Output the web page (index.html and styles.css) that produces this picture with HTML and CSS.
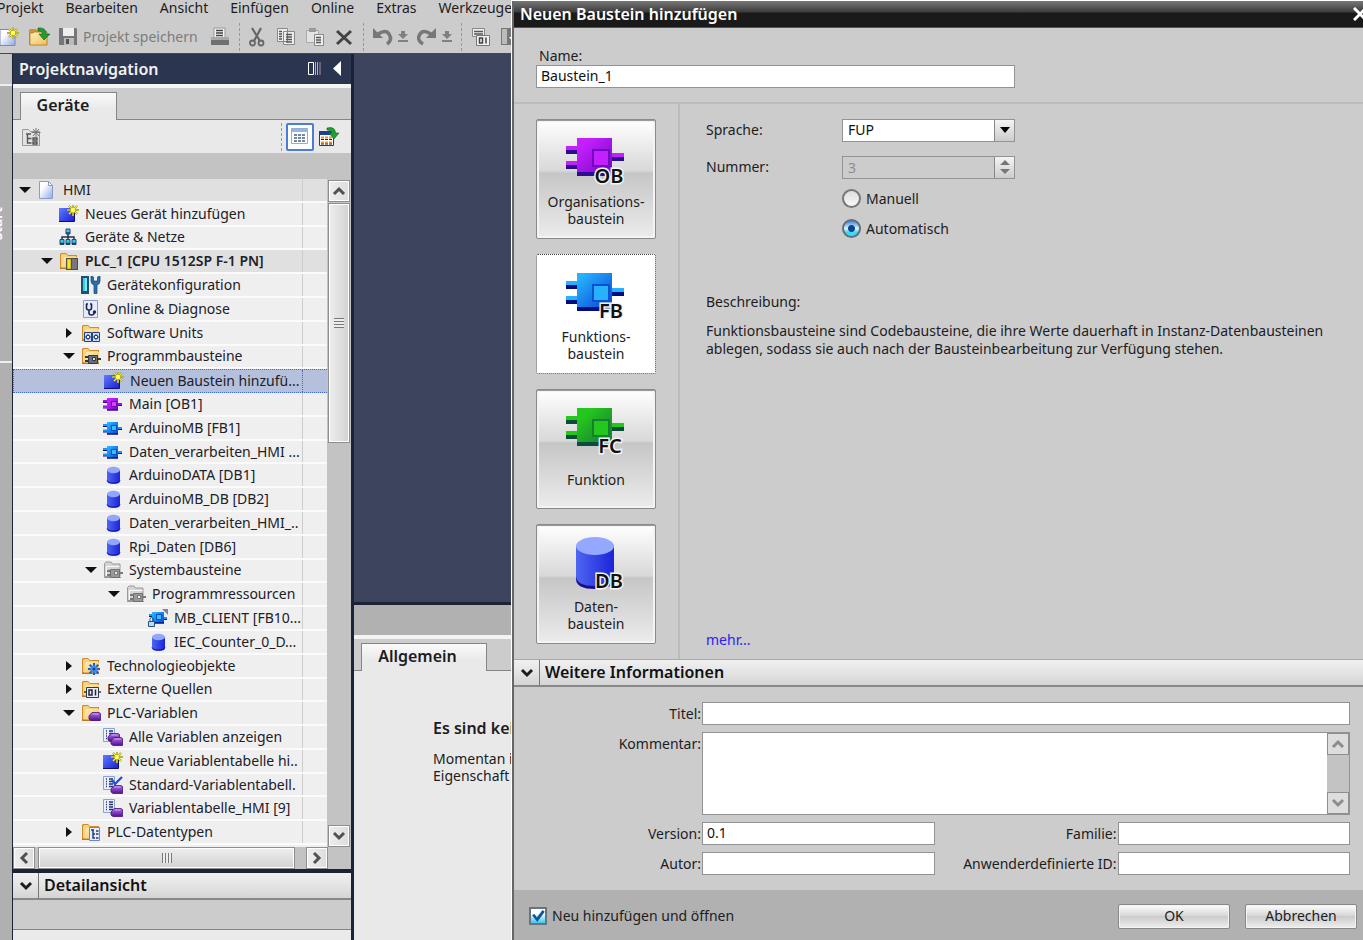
FILE: index.html
```html
<!DOCTYPE html>
<html lang="de">
<head>
<meta charset="utf-8">
<title>Neuen Baustein hinzufügen</title>
<link rel="stylesheet" href="styles.css">
</head>
<body>
<svg class="sprite" width="0" height="0" aria-hidden="true">
  <defs>
    <linearGradient id="g-purple" x1="0" y1="0" x2="1" y2="1"><stop offset=".2" stop-color="#c41fff"/><stop offset="1" stop-color="#7408c0"/></linearGradient>
    <linearGradient id="g-blue" x1="0" y1="0" x2="1" y2="1"><stop offset=".1" stop-color="#27b2ff"/><stop offset="1" stop-color="#0546d2"/></linearGradient>
    <linearGradient id="g-green" x1="0" y1="0" x2="1" y2="1"><stop offset=".2" stop-color="#24c81c"/><stop offset="1" stop-color="#187838"/></linearGradient>
    <linearGradient id="g-royal" x1="0" y1="0" x2="1" y2="1"><stop offset="0" stop-color="#5f7cff"/><stop offset="1" stop-color="#1a1ed0"/></linearGradient>
    <linearGradient id="g-cyl" x1="0" y1="0" x2="1" y2="0"><stop offset="0" stop-color="#4d66f2"/><stop offset="1" stop-color="#1c24d8"/></linearGradient>
    <linearGradient id="g-folder" x1="0" y1="0" x2="1" y2="1"><stop offset="0" stop-color="#fff0bd"/><stop offset="1" stop-color="#efbf5c"/></linearGradient>
    <linearGradient id="g-page" x1="0" y1="0" x2="1" y2="1"><stop offset=".3" stop-color="#fff"/><stop offset="1" stop-color="#8fa8e8"/></linearGradient>
    <linearGradient id="g-tag" x1="0" y1="0" x2="0" y2="1"><stop offset="0" stop-color="#b070e8"/><stop offset="1" stop-color="#501090"/></linearGradient>

    <symbol id="star" viewBox="0 0 12 12"><path d="M6 0v12M0 6h12M2 2l8 8M10 2l-8 8" stroke="#6a7440" stroke-width="2"/><path d="M6 0v12M0 6h12M2 2l8 8M10 2l-8 8" stroke="#fff22a" stroke-width="1.1"/><circle cx="6" cy="6" r="2" fill="#ffff50"/></symbol>
    <symbol id="folder" viewBox="0 0 20 18"><path d="M1 16V2l1-1h5l2 2h9v13z" fill="#cf8a2c"/><path d="M2 15V3l1-1h4l2 2h8v11z" fill="#f6d27c"/><path d="M3 15.500L5 5h13v10.500z" fill="url(#g-folder)"/><path d="M1 16.500h17" stroke="#b87828"/></symbol>
    <symbol id="folder-grey" viewBox="0 0 20 18"><path d="M1.500 15.500V2.500L3 1h5l1.500 2H17v12.500z" fill="#d4d4d4" stroke="#999"/><path d="M3.500 15V5.500h13" stroke="#f8f8f8" fill="none"/><path d="M1 16.500h17" stroke="#999"/></symbol>
    <symbol id="i-page" viewBox="0 0 20 18"><path d="M2.500.5h9l4 4v13h-13z" fill="url(#g-page)" stroke="#8c9cc8"/><path d="M11.500.5v4h4z" fill="#fff" stroke="#8c9cc8"/></symbol>
    <symbol id="i-new" viewBox="0 0 20 18"><path d="M0 3h15v14H0z" fill="url(#g-royal)"/><path d="M0 16.500h15.500V3" fill="none" stroke="#101070"/><use href="#star" x="8" y="-1" width="12" height="12"/></symbol>
    <symbol id="i-net" viewBox="0 0 20 18"><path d="M9 6v4M3 12V9h12v3M9 9v3" stroke="#203050" fill="none" stroke-width="1.500"/><g fill="#35cbe0" stroke="#254a78"><path d="M7 1h4v5H7zM1 11.500h4v5H1zM7 11.500h4v5H7zM13 11.500h4v5h-4z"/></g><path d="M1 15.500h4M7 15.500h4M13 15.500h4M7 5h4" stroke="#223c66" stroke-width="1.500"/></symbol>
    <symbol id="i-plc" viewBox="0 0 20 18"><use href="#folder" width="20" height="18"/><path d="M7 6h12v12H7z" fill="#4a4a52"/><path d="M8 7h4v10H8z" fill="#f7e52a" stroke="#806c10" stroke-width=".6"/><path d="M13 7h5v10h-5z" fill="#77777d"/></symbol>
    <symbol id="i-config" viewBox="0 0 20 18"><path d="M0 0h8v18H0z" fill="#1f4f74"/><path d="M2 2h4v13H2z" fill="#38d0e0"/><path d="M4 2h2v13H4z" fill="#7ce8f0"/><path d="M10 0v5q0 3 3 4v8q0 1 1 1h1q1 0 1-1V9q3-1 3-4V0l-2.500 1v4h-4V1z" fill="#2670ac" stroke="#184470" stroke-width=".7"/></symbol>
    <symbol id="i-diag" viewBox="0 0 20 18"><path d="M2.500.5h14v17h-14z" fill="#e6ecfc" stroke="#8c9cc8"/><path d="M5 4h2M9 4h2M5.500 4v4q0 2 2.500 2t2.500-2V4M8 10v3q0 2 2.500 2t2.500-2" fill="none" stroke="#1c2458" stroke-width="1.600"/><circle cx="13.500" cy="12" r="1.700" fill="#1c2458"/></symbol>
    <symbol id="i-units" viewBox="0 0 20 18"><use href="#folder" width="20" height="18"/><path d="M3.500 8.500h7v9h-7zM11.500 8.500h7v9h-7z" fill="#cfdcf8" stroke="#27407c"/><path d="M4 13h6M12 13h6M7 10v6M15 10v6" stroke="#27407c"/><path d="M5.500 11.500h3v3h-3zM13.500 11.500h3v3h-3z" fill="#fff" stroke="#27407c"/></symbol>
    <symbol id="i-prog" viewBox="0 0 20 18"><use href="#folder" width="20" height="18"/><path d="M4 10h4M4 14h4M16 12h4" stroke="#303848" stroke-width="2"/><path d="M7.500 8.500h9v8h-9z" fill="#68707e" stroke="#303848"/><path d="M11.500 10.500h3v3h-3z" fill="#d8dce4" stroke="#303848"/></symbol>
    <symbol id="i-sys" viewBox="0 0 20 18"><use href="#folder-grey" width="20" height="18"/><path d="M4 10h4M4 14h4M16 12h4" stroke="#777" stroke-width="2"/><path d="M7.500 8.500h9v8h-9z" fill="#999" stroke="#707070"/><path d="M11.500 10.500h3v3h-3z" fill="#eee" stroke="#777"/></symbol>
    <symbol id="i-ob" viewBox="0 0 20 18"><path d="M0 6h4M0 11.500h4M14 9h5" stroke="#a010e0" stroke-width="2"/><path d="M0 7.500h4M0 13h4M14 10.500h5" stroke="#380a90"/><path d="M4 3h11v12H4z" fill="url(#g-purple)"/><path d="M4 15h11" stroke="#380a90" stroke-width="1.500"/><path d="M8.500 6.500h5v5h-5z" fill="#d045ff" stroke="#6a08b0"/></symbol>
    <symbol id="i-fb" viewBox="0 0 20 18"><path d="M0 6h4M0 11.500h4M14 9h5" stroke="#109cf0" stroke-width="2"/><path d="M0 7.500h4M0 13h4M14 10.500h5" stroke="#00107c"/><path d="M4 3h11v12H4z" fill="url(#g-blue)"/><path d="M4 15h11" stroke="#00107c" stroke-width="1.500"/><path d="M8.500 6.500h5v5h-5z" fill="#2ec2ff" stroke="#0848b8"/></symbol>
    <symbol id="i-fbk" viewBox="0 0 20 18"><path d="M1 6h4M14 9h5" stroke="#109cf0" stroke-width="2"/><path d="M1 7.500h4M14 10.500h5" stroke="#00107c"/><path d="M4 3h12v11H4z" fill="url(#g-blue)"/><path d="M4 14h12" stroke="#00107c" stroke-width="1.500"/><path d="M8.500 5.500h5v5h-5z" fill="#2ec2ff" stroke="#0848b8"/><path d="M14 0h6v6z" fill="#7a8798"/><path d="M2 12v-1.500q0-2 1.500-2t1.500 2V12" fill="none" stroke="#28507c"/><path d="M.5 12.500h6v5h-6z" fill="#b8dcf4" stroke="#28507c"/></symbol>
    <symbol id="i-db" viewBox="0 0 20 18"><path d="M4 4v11q0 3 6.500 3t6.500-3V4z" fill="url(#g-cyl)"/><path d="M4 14.500q1 2.500 6.500 2.500t6.500-2.500" fill="none" stroke="#1414a0"/><ellipse cx="10.500" cy="4" rx="6.500" ry="3.200" fill="#93a6ff"/></symbol>
    <symbol id="i-tech" viewBox="0 0 20 18"><use href="#folder" width="20" height="18"/><path d="M13 6v12M7 12h12M8.700 7.700l8.600 8.600M17.300 7.700l-8.600 8.600" stroke="#1c60c0" stroke-width="2"/><circle cx="13" cy="12" r="3.600" fill="#3a8cec"/><circle cx="13" cy="12" r="1.300" fill="#123c88"/></symbol>
    <symbol id="i-ext" viewBox="0 0 20 18"><use href="#folder" width="20" height="18"/><path d="M3 12h17" stroke="#303848" stroke-width="1.500"/><path d="M5.500 7.500h12v10h-12z" fill="#e8ecf4" stroke="#303848"/><path d="M8 10h3v5H8zM14.500 9.500v6" fill="none" stroke="#202840" stroke-width="1.500"/></symbol>
    <symbol id="tag" viewBox="0 0 13 9"><path d="M1 4l3-3.500h7l1.500 1V8.500H3L1 7z" fill="url(#g-tag)" stroke="#46107c" stroke-width=".8"/><path d="M4.500 2h6" stroke="#cda0f4"/></symbol>
    <symbol id="i-vars" viewBox="0 0 20 18"><use href="#folder" width="20" height="18"/><use href="#tag" x="7" y="8" width="13" height="9"/></symbol>
    <symbol id="sheet" viewBox="0 0 12 14"><path d="M.5.5h11v13H.5z" fill="#e9effe" stroke="#8aa0d8"/><path d="M3 3h1M6 3h4M3 5.500h1M6 5.500h4M3 8h1M6 8h4M3 10.500h1M6 10.500h4" stroke="#24346c" stroke-width="1.300"/></symbol>
    <symbol id="i-all" viewBox="0 0 20 18"><use href="#sheet" width="12" height="14"/><use href="#tag" x="4" y="5" width="13" height="9"/><use href="#tag" x="7" y="9" width="13" height="9"/></symbol>
    <symbol id="i-std" viewBox="0 0 20 18"><use href="#sheet" width="12" height="14"/><use href="#tag" x="7" y="9" width="13" height="9"/><path d="M9 4l3 4 7-7" fill="none" stroke="#2450d0" stroke-width="2.400"/></symbol>
    <symbol id="i-table" viewBox="0 0 20 18"><use href="#sheet" width="12" height="14"/><use href="#tag" x="7" y="9" width="13" height="9"/></symbol>
    <symbol id="i-types" viewBox="0 0 20 18"><use href="#folder" width="20" height="18"/><path d="M8.500 4.500h10v13h-10z" fill="#e6eefe" stroke="#7088c0"/><path d="M10 7h3M12 7v8h2M12 11h2M15 8h2.500M15 11h2.500M15 15h2.500" fill="none" stroke="#1c3c78" stroke-width="1.400"/></symbol>
    <symbol id="up" viewBox="0 0 14 10"><path d="M2 8l5-5 5 5" fill="none" stroke="currentColor" stroke-width="3"/></symbol>
    <symbol id="down" viewBox="0 0 14 10"><path d="M2 2l5 5 5-5" fill="none" stroke="currentColor" stroke-width="3"/></symbol>
    <symbol id="left" viewBox="0 0 10 14"><path d="M8 2L3 7l5 5" fill="none" stroke="currentColor" stroke-width="3"/></symbol>
    <symbol id="right" viewBox="0 0 10 14"><path d="M2 2l5 5-5 5" fill="none" stroke="currentColor" stroke-width="3"/></symbol>
    <symbol id="plug" viewBox="0 0 60 58"><path d="M0 15h11v5H0zM0 30h11v5H0zM46 22h12v4H46z" fill="var(--hi)"/><path d="M0 19h11v4H0zM0 34h11v4H0zM46 26h12v4H46zM11 40h36v5H11z" fill="var(--lo)"/><path d="M11 7h35v34H11z" fill="var(--body)"/><path d="M27 19h16v16H27z" fill="var(--hi)" stroke="var(--edge)" stroke-width="2"/></symbol>
  </defs>
</svg>

<div class="app">
  <nav class="menubar">
    <button>Projekt</button><button>Bearbeiten</button><button>Ansicht</button><button>Einfügen</button><button>Online</button><button>Extras</button><button>Werkzeuge</button>
  </nav>
  <div class="toolbar">
    <button aria-label="Neues Projekt"><svg width="20" height="20"><path d="M0 2.500h10l5 5v11H0z" fill="url(#g-page)" stroke="#7888c0"/><use href="#star" x="7" y="0" width="12" height="12"/></svg></button>
    <button aria-label="Projekt öffnen"><svg width="21" height="20"><path d="M0 18V3l1-1h6l2 2h9v14z" fill="#d9902a"/><path d="M1 18V6h3l1-1h13v13z" fill="url(#g-folder)" stroke="#b87420" stroke-width=".8"/><path d="M9 1q8-1 8 6h4l-6 6-5-6h3.500q0-3-4.500-3z" fill="#1f9c34" stroke="#0d5c1c" stroke-width=".6"/></svg></button>
    <button class="save"><svg width="20" height="20"><path d="M0 1h17l1 1v16H0z" fill="#777"/><path d="M4 1h11v8H4z" fill="#efefef"/><path d="M5 11h10v7H5z" fill="#bbb"/><path d="M7 12h3v5H7z" fill="#555"/></svg><span>Projekt speichern</span></button>
    <button aria-label="Drucken"><svg width="20" height="20"><path d="M4 1h11v10H4z" fill="#f4f4f4" stroke="#999"/><path d="M6 3.500h7M6 6h7M6 8.500h7" stroke="#444" stroke-width="1.500"/><path d="M1 10h18v8H1z" fill="#6f6f6f"/><path d="M1 10h18v3H1z" fill="#a8a8a8"/></svg></button>
    <i class="sep"></i>
    <button aria-label="Ausschneiden"><svg width="18" height="20"><path d="M3 1l8 13M12 1L5 14" stroke="#666" stroke-width="2.200"/><circle cx="3.500" cy="16" r="2.500" fill="none" stroke="#666" stroke-width="1.800"/><circle cx="12" cy="16" r="2.500" fill="none" stroke="#666" stroke-width="1.800"/></svg></button>
    <button aria-label="Kopieren"><svg width="20" height="20"><path d="M1.500 1.500h10v13h-10zM7.500 4.500h11v13h-11z" fill="#eee" stroke="#888"/><path d="M3 4.500h3M3 7h3M3 9.500h3M3 12h3M10 7.500h6M10 10h6M10 12.500h6M10 15h6" stroke="#555" stroke-width="1.300"/></svg></button>
    <button aria-label="Einfügen"><svg width="20" height="20"><path d="M1.500 3.500h12v12h-12z" fill="#e3e3e3" stroke="#aaa"/><path d="M4 1h7v4H4z" fill="#999"/><path d="M9.500 7.500h9v11h-9z" fill="#eee" stroke="#888"/><path d="M11 10.500h5M11 13h5M11 15.500h5" stroke="#555" stroke-width="1.300"/></svg></button>
    <button aria-label="Löschen"><svg width="20" height="20"><path d="M3 4l14 13M17 4L3 17" stroke="#444" stroke-width="3"/></svg></button>
    <i class="sep"></i>
    <button aria-label="Rückgängig"><svg width="35" height="20"><path d="M5 7q8-5 11 0 4 6-2 10" fill="none" stroke="#777" stroke-width="3.500"/><path d="M0 1v10h10z" fill="#777"/><path d="M28 4h4v3h3l-5 5-5-5h3zM25 13h10v2H25z" fill="#808080"/></svg></button>
    <button aria-label="Wiederholen"><svg width="35" height="20"><path d="M14 7Q6 2 3 7q-4 6 3 10" fill="none" stroke="#777" stroke-width="3.500"/><path d="M19 1v10H9z" fill="#777"/><path d="M28 4h4v3h3l-5 5-5-5h3zM25 13h10v2H25z" fill="#808080"/></svg></button>
    <i class="sep"></i>
    <button aria-label="Übersetzen"><svg width="20" height="20"><path d="M1.500 1.500h12v8h-12z" fill="#eee" stroke="#888"/><path d="M3 4.500h9M3 7h9" stroke="#555" stroke-width="1.500"/><path d="M5.500 8.500h13v10h-13z" fill="#f2f2f2" stroke="#777"/><path d="M8.500 11h3v5h-3zM15 10.500v6" fill="none" stroke="#444" stroke-width="1.500"/></svg></button>
    <button aria-label="Laden"><svg width="20" height="20"><path d="M1 1h18v17H1z" fill="#777"/><path d="M2 2h5v15H2z" fill="#bbb"/><path d="M12 3h4v7h3l-5 6-5-6h3z" fill="#fff"/></svg></button>
  </div>

  <div class="main">
    <aside class="rail"><div class="rail-top"></div><div class="rail-tab"><span>Start</span></div><div class="rail-rest"></div></aside>

    <section class="nav">
      <header class="nav-head"><h2>Projektnavigation</h2>
        <svg width="16" height="16"><path d="M1.500 1.500h5v12h-5z" fill="none" stroke="#fff"/><path d="M8.500 1v13M10.500 1v13" stroke="#aab0c0"/><path d="M13 1v13" stroke="#667" stroke-width="2"/></svg>
        <svg width="8" height="16"><path d="M8 0v15L0 7.500z" fill="#fff"/></svg>
      </header>
      <div class="tabs"><button class="tab">Geräte</button></div>
      <div class="nav-tools">
        <button aria-label="Gerät"><svg width="22" height="20"><path d="M1.500 2.500h6l2 2h9v14h-17z" fill="#e2e2e2" stroke="#999"/><path d="M5 7h5M6.500 7v9h4M6.500 11.500h4M12 11h4v2h-4zM12 15h4v2h-4z" fill="none" stroke="#555" stroke-width="1.400"/><path d="M15 1v9M10.500 5.500h9M12 2l6 7M18 2l-6 7" stroke="#777"/></svg></button>
        <i class="sep"></i>
        <button class="toggled" aria-label="Liste"><svg width="20" height="20"><path d="M1.500 1.500h16v15h-16z" fill="#fff" stroke="#8cb0dc"/><path d="M2 2h15v3H2z" fill="#9cb4d8"/><path d="M4 8h3M8 8h3M12 8h3M4 11h3M8 11h3M12 11h3M4 14h3M8 14h3M12 14h3" stroke="#44608c" stroke-width="1.400"/></svg></button>
        <button aria-label="Übersicht"><svg width="22" height="20"><path d="M1.500 4.500h14v14h-14z" fill="#fff" stroke="#1c3c80"/><path d="M1 4h15v4H1z" fill="#1c4090"/><path d="M3 10.500h3M7 10.500h3M11 10.500h3M3 15.500h3M7 15.500h3M11 15.500h3" stroke="#e89828" stroke-width="2"/><path d="M3 12.500h3M7 12.500h3M11 12.500h3M3 17h3M7 17h3M11 17h3" stroke="#222"/><path d="M9 1q8-2 8.500 5H21l-5 6-5-6h3q-1-3-5-3z" fill="#1fa034" stroke="#0d5c1c" stroke-width=".6"/></svg></button>
      </div>
      <div class="nav-band"></div>
      <div class="tree-area">
        <ul class="tree">
          <li class="l0 open strong"><svg><use href="#i-page"/></svg><span>HMI</span></li>
          <li class="l1"><svg><use href="#i-new"/></svg><span>Neues Gerät hinzufügen</span></li>
          <li class="l1"><svg><use href="#i-net"/></svg><span>Geräte &amp; Netze</span></li>
          <li class="l1 open strong"><svg><use href="#i-plc"/></svg><span class="bold">PLC_1 [CPU 1512SP F-1 PN]</span></li>
          <li class="l2"><svg><use href="#i-config"/></svg><span>Gerätekonfiguration</span></li>
          <li class="l2"><svg><use href="#i-diag"/></svg><span>Online &amp; Diagnose</span></li>
          <li class="l2 closed"><svg><use href="#i-units"/></svg><span>Software Units</span></li>
          <li class="l2 open"><svg><use href="#i-prog"/></svg><span>Programmbausteine</span></li>
          <li class="l3 selected"><svg><use href="#i-new"/></svg><span>Neuen Baustein hinzufü...</span></li>
          <li class="l3"><svg><use href="#i-ob"/></svg><span>Main [OB1]</span></li>
          <li class="l3"><svg><use href="#i-fb"/></svg><span>ArduinoMB [FB1]</span></li>
          <li class="l3"><svg><use href="#i-fb"/></svg><span>Daten_verarbeiten_HMI ...</span></li>
          <li class="l3"><svg><use href="#i-db"/></svg><span>ArduinoDATA [DB1]</span></li>
          <li class="l3"><svg><use href="#i-db"/></svg><span>ArduinoMB_DB [DB2]</span></li>
          <li class="l3"><svg><use href="#i-db"/></svg><span>Daten_verarbeiten_HMI_..</span></li>
          <li class="l3"><svg><use href="#i-db"/></svg><span>Rpi_Daten [DB6]</span></li>
          <li class="l3 open"><svg><use href="#i-sys"/></svg><span>Systembausteine</span></li>
          <li class="l4 open"><svg><use href="#i-sys"/></svg><span>Programmressourcen</span></li>
          <li class="l5"><svg><use href="#i-fbk"/></svg><span>MB_CLIENT [FB10...</span></li>
          <li class="l5"><svg><use href="#i-db"/></svg><span>IEC_Counter_0_D...</span></li>
          <li class="l2 closed"><svg><use href="#i-tech"/></svg><span>Technologieobjekte</span></li>
          <li class="l2 closed"><svg><use href="#i-ext"/></svg><span>Externe Quellen</span></li>
          <li class="l2 open"><svg><use href="#i-vars"/></svg><span>PLC-Variablen</span></li>
          <li class="l3"><svg><use href="#i-all"/></svg><span>Alle Variablen anzeigen</span></li>
          <li class="l3"><svg><use href="#i-new"/></svg><span>Neue Variablentabelle hi..</span></li>
          <li class="l3"><svg><use href="#i-std"/></svg><span>Standard-Variablentabell.</span></li>
          <li class="l3"><svg><use href="#i-table"/></svg><span>Variablentabelle_HMI [9]</span></li>
          <li class="l2 closed"><svg><use href="#i-types"/></svg><span>PLC-Datentypen</span></li>
        </ul>
        <div class="vscroll">
          <button class="sb" aria-label="Nach oben"><svg width="14" height="10"><use href="#up"/></svg></button>
          <div class="vthumb"><i></i></div><div class="vtrack"></div>
          <button class="sb" aria-label="Nach unten"><svg width="14" height="10"><use href="#down"/></svg></button>
        </div>
      </div>
      <div class="hscroll">
        <button class="sb" aria-label="Nach links"><svg width="10" height="14"><use href="#left"/></svg></button>
        <div class="hthumb"><i></i></div>
        <button class="sb" aria-label="Nach rechts"><svg width="10" height="14"><use href="#right"/></svg></button>
      </div>
      <div class="bar detail"><button aria-label="Detailansicht einklappen"><svg width="14" height="10"><use href="#down"/></svg></button><h2>Detailansicht</h2></div>
      <div class="detail-band"></div>
      <div class="detail-body"></div>
    </section>

    <section class="work">
      <div class="canvas"></div>
      <div class="work-band"></div>
      <div class="tabs"><button class="tab wide">Allgemein</button></div>
      <div class="props">
        <h3>Es sind keine</h3>
        <p>Momentan ist<br>Eigenschaft</p>
      </div>
    </section>
  </div>
</div>

<div class="dialog" role="dialog" aria-label="Neuen Baustein hinzufügen">
  <header class="title"><h1>Neuen Baustein hinzufügen</h1><button aria-label="Schließen"><svg width="14" height="14"><path d="M1 1l12 12M13 1L1 13" stroke="#fff" stroke-width="3"/></svg></button></header>
  <div class="name"><label for="name">Name:</label><input id="name" value="Baustein_1"></div>
  <div class="body">
    <div class="kinds">
      <button class="kind"><svg class="purple" width="60" height="58"><use href="#plug"/><text x="43" y="52">OB</text></svg><span>Organisations-<br>baustein</span></button>
      <button class="kind chosen"><svg class="blue" width="60" height="58"><use href="#plug"/><text x="45" y="52">FB</text></svg><span>Funktions-<br>baustein</span></button>
      <button class="kind"><svg class="green" width="60" height="58"><use href="#plug"/><text x="44" y="52">FC</text></svg><span>Funktion</span></button>
      <button class="kind"><svg width="60" height="58"><path d="M10 10v33q0 10 19 10t19-10V10z" fill="#180c90"/><path d="M10 10v30q0 10 19 10t19-10V10z" fill="url(#g-cyl)"/><ellipse cx="29" cy="10" rx="19" ry="9" fill="#95a8ff"/><text x="43" y="52">DB</text></svg><span>Daten-<br>baustein</span></button>
    </div>
    <div class="settings">
      <div class="options">
        <label for="lang">Sprache:</label>
        <div class="combo"><select id="lang"><option>FUP</option></select><i><svg width="10" height="6"><path d="M0 0h10L5 6z"/></svg></i></div>
        <label for="num">Nummer:</label>
        <div class="combo off"><input id="num" value="3" disabled><i><svg width="12" height="16"><path d="M1 6h10L6 1zM1 10h10l-5 5z" fill="#777"/></svg></i></div>
        <label class="choice"><input type="radio" name="mode">Manuell</label>
        <label class="choice"><input type="radio" name="mode" checked>Automatisch</label>
      </div>
      <h4>Beschreibung:</h4>
      <p>Funktionsbausteine sind Codebausteine, die ihre Werte dauerhaft in Instanz-Datenbausteinen<br>ablegen, sodass sie auch nach der Bausteinbearbeitung zur Verfügung stehen.</p>
      <a href="#mehr">mehr...</a>
    </div>
  </div>
  <div class="bar"><button aria-label="Weitere Informationen einklappen"><svg width="14" height="10"><use href="#down"/></svg></button><h2>Weitere Informationen</h2></div>
  <div class="form">
    <label for="titel">Titel:</label><input class="full" id="titel">
    <label class="top" for="komm">Kommentar:</label>
    <div class="memo full"><textarea id="komm"></textarea><div class="memo-scroll"><button class="sb" aria-label="Nach oben"><svg width="14" height="10"><use href="#up"/></svg></button><button class="sb" aria-label="Nach unten"><svg width="14" height="10"><use href="#down"/></svg></button></div></div>
    <label for="ver">Version:</label><input id="ver" value="0.1">
    <label for="fam">Familie:</label><input id="fam">
    <label for="aut">Autor:</label><input id="aut">
    <label for="uid">Anwenderdefinierte ID:</label><input id="uid">
  </div>
  <footer><label class="check"><input type="checkbox" checked>Neu hinzufügen und öffnen</label><button>OK</button><button>Abbrechen</button></footer>
</div>
</body>
</html>
```

FILE: styles.css
```css
* { box-sizing: border-box; }
html, body { height: 100%; }
body {
  margin: 0;
  overflow: hidden;
  font: 14px/18px "Noto Sans", "Open Sans", sans-serif;
  color: #1c1c22;
  background: #ccc;
}
h1, h2, h3, h4, p, ul { margin: 0; padding: 0; }
button { font: inherit; color: inherit; background: none; border: 0; padding: 0; margin: 0; white-space: nowrap; }
input, textarea, select { font: inherit; color: #111; margin: 0; }
svg { display: block; flex: none; }
.sprite { position: absolute; }

/* application window */
.app { height: 100%; display: flex; flex-direction: column; }
.menubar { display: flex; gap: 22px; height: 20px; margin-left: -3px; padding-bottom: 4px; overflow: hidden; flex: none; line-height: 16px; }
.toolbar { display: flex; align-items: center; gap: 9px; height: 34px; border-bottom: 1px solid #42485c; flex: none; overflow: hidden; }
.toolbar .save { display: flex; align-items: center; gap: 4px; color: #7c7c7c; margin-right: 3px; }
.sep { width: 1px; height: 28px; border-left: 1px dashed #999; flex: none; }
.main { flex: 1; display: flex; min-height: 0; background: #1c2336; gap: 3px; }

.rail { width: 12px; display: flex; flex-direction: column; gap: 2px; background: #eee; flex: none; margin-right: -2px; }
.rail-top { height: 30px; background: #c6c6c6; }
.rail-tab { height: 275px; background: #b0b0b0; display: flex; align-items: center; justify-content: flex-end; overflow: hidden; }
.rail-tab span { writing-mode: vertical-rl; transform: rotate(180deg); color: #fff; font-weight: 600; font-size: 14px; margin-right: 6px; }
.rail-rest { flex: 1; background: #b0b0b0; }

.nav { width: 338px; display: flex; flex-direction: column; flex: none; background: #ccc; }
.nav-head { display: flex; align-items: center; gap: 10px; height: 30px; padding: 0 10px 0 6px; background: #2c3550; color: #f2f2f2; flex: none; }
h2 { font-size: 16px; line-height: 20px; font-weight: 600; flex: 1; }
.tabs { display: flex; height: 36px; padding: 8px 7px 0; background: linear-gradient(#f4f4f4 4px, #ccc 4px); border-bottom: 1px solid #858585; flex: none; }
.tab { width: 97px; height: 28px; background: linear-gradient(#fafafa, #e9e9e9 60%); border: 1px solid #858585; border-bottom: 0; font-size: 16px; font-weight: 600; padding: 0 11px 4px 0; }
.tab.wide { width: 126px; padding-right: 13px; }
.nav-tools { display: flex; align-items: center; gap: 4px; height: 33px; padding: 0 11px 0 8px; background: #e9e9e9; flex: none; }
.nav-tools .sep { margin-left: auto; }
.toggled { width: 28px; height: 28px; border: 2px solid #4a7cd8; border-radius: 2px; background: #fff; display: flex; align-items: center; justify-content: center; }
.nav-band { height: 26px; background: #c3c3c3; flex: none; }

.tree-area { flex: 1; display: flex; min-height: 0; background: #c3c3c3; }
.tree { list-style: none; flex: 1; display: grid; grid-auto-rows: 1fr; padding-bottom: 2px; background: #efefef; overflow: hidden; margin-right: 1px; }
.tree li { display: grid; grid-template-columns: 18px 20px 1fr 25px; column-gap: 6px; align-items: center; min-height: 0; border-bottom: 2px solid #fbfbfb; white-space: nowrap; color: #202028; }
.tree li::before { content: ""; justify-self: end; }
.tree li::after { content: ""; align-self: stretch; border-left: 1px solid #ccc; }
.tree li.open::before { border: 6px solid transparent; border-top-color: #111; border-bottom: 0; }
.tree li.closed::before { border: 5px solid transparent; border-left: 6px solid #111; border-right: 0; margin-right: 3px; }
.tree svg { width: 20px; height: 18px; }
.tree span { overflow: hidden; line-height: 20px; margin-right: -6px; }
.tree .bold { font-weight: 600; }
.tree .strong { background: #e0e0e0; }
.tree .selected { background: #b4c0dc; border: 1px dotted #3c6cd0; border-width: 1px 0 1px 1px; }
.tree .selected::after { border-left: 1px dotted #3c6cd0; }
.l1 { padding-left: 22px; }
.l2 { padding-left: 44px; }
.l3 { padding-left: 66px; }
.l4 { padding-left: 89px; }
.l5 { padding-left: 111px; }

.sb { display: flex; align-items: center; justify-content: center; width: 22px; height: 22px; background: linear-gradient(90deg, #eee, #ddd); border: 1px solid #8e8e8e; box-shadow: inset 0 0 0 1px #fff; color: #505050; flex: none; }
.vscroll { width: 23px; display: flex; flex-direction: column; flex: none; padding: 1px 1px 0 0; }
.vthumb, .hthumb { border: 1px solid #8e8e8e; box-shadow: inset 0 0 0 1px #fff; display: flex; align-items: center; justify-content: center; }
.vthumb { flex: 239; margin-top: 1px; width: 22px; background: linear-gradient(90deg, #eee, #d2d2d2); }
.vthumb i { width: 10px; height: 10px; background: repeating-linear-gradient(#777 0 1px, #eee 1px 3px); }
.vtrack { flex: 383; }
.hscroll { display: flex; height: 22px; gap: 3px; padding-right: 23px; background: #c3c3c3; flex: none; }
.hthumb { flex: 1; background: linear-gradient(#eee, #d2d2d2); margin-right: 8px; }
.hthumb i { width: 10px; height: 10px; background: repeating-linear-gradient(90deg, #777 0 1px, #eee 1px 3px); }

.bar { display: flex; align-items: stretch; height: 28px; background: linear-gradient(#f0f0f0, #e4e4e4 50%, #d4d4d4); border-top: 1px solid #aaa; border-bottom: 2px solid #888; flex: none; }
.bar button { width: 26px; display: flex; align-items: center; justify-content: center; border-right: 1px solid #777; }
.bar h2 { padding: 2px 5px; color: #111; }
.detail { height: 31px; border-top: 4px solid #1c2336; }
.detail-band { height: 30px; border-bottom: 1px solid #858585; flex: none; }
.detail-body { height: 10px; background: #eaeaea; flex: none; }

.work { flex: 1; display: flex; flex-direction: column; background: #e9e9e9; }
.canvas { flex: 1; background: #3c445e; border-bottom: 3px solid #1c2336; }
.work-band { height: 30px; background: #b1b1b1; flex: none; }
.props { height: 269px; padding: 47px 79px; flex: none; }
.props h3 { font-size: 16px; line-height: 20px; font-weight: 600; margin-bottom: 12px; }
.props p { line-height: 17px; }

/* dialog window */
.dialog { position: absolute; top: 0; right: 0; bottom: 0; left: 511px; display: flex; flex-direction: column; background: #ccc; border-top: 1px solid #fff; border-left: 1px solid #fff; box-shadow: inset 2px 0 #666; padding-left: 2px; }
.title { display: flex; align-items: center; height: 27px; padding-left: 6px; background: linear-gradient(#777 0, #3c3c3c 11px, #1a1a1a 12px); border-bottom: 1px solid #555; color: #fff; flex: none; overflow: hidden; }
.title h1 { flex: 1; font-size: 16px; line-height: 20px; font-weight: 600; }
.title button { margin-right: -4px; }
.name { display: flex; flex-direction: column; height: 76px; padding: 19px 22px 0; border-bottom: 2px solid #bbb; flex: none; }
.name label { padding-left: 3px; }
.name input { width: 479px; }
.dialog input:not([type]), textarea, .combo { height: 23px; border: 1px solid #939393; background: #fff; padding: 0 4px 2px; outline: 0; }
.body { flex: 1; display: flex; min-height: 0; }
.kinds { width: 166px; padding: 15px 22px 14px; display: flex; flex-direction: column; gap: 15px; border-right: 2px solid #bbb; }
.kind { width: 120px; height: 120px; display: flex; flex-direction: column; align-items: center; padding-top: 11px; border: 1px solid #8a8a8a; border-radius: 2px; background: linear-gradient(#fff, #d8d8d8 43%, #c6c6c6 45%, #ececec); box-shadow: inset 0 1px #999, inset 0 0 0 2px #f4f4f4; line-height: 17px; flex: none; }
.kind span { flex: 1; display: flex; align-items: center; margin-bottom: 8px; }
.kind text { font: 600 20px "Noto Sans", sans-serif; text-anchor: middle; fill: #111; stroke: #f4f4f4; stroke-width: 3px; paint-order: stroke; }
.chosen { background: #fff; border: 1px dotted #444; box-shadow: none; }
.purple { --hi: #c41fff; --lo: #2c0c90; --edge: #7408c0; --body: url(#g-purple); }
.blue { --hi: #27b2ff; --lo: #000c80; --edge: #0a50d0; --body: url(#g-blue); }
.green { --hi: #24c81c; --lo: #0c4c3c; --edge: #148030; --body: url(#g-green); }

.settings { flex: 1; display: flex; flex-direction: column; align-items: flex-start; padding: 9px 4px 10px 26px; min-width: 0; }
.options { display: grid; grid-template: 34px 26px 23px 23px / 136px 173px; row-gap: 7px; align-items: center; margin-bottom: 53px; }
.combo { display: flex; padding: 0; }
.combo select, .combo input:not([type]) { flex: 1; min-width: 0; height: 21px; appearance: none; border: 0; background: none; padding: 0 5px; outline: 0; }
.combo i { width: 20px; display: flex; align-items: center; justify-content: center; border-left: 1px solid #888; background: linear-gradient(#f4f4f4, #ccc); }
.combo.off { background: #ccc; }
.combo.off input { color: #8c8c8c; }
.choice { grid-column: 2; display: flex; align-items: center; gap: 5px; }
.choice input { appearance: none; width: 19px; height: 19px; border-radius: 50%; border: 2px solid #777; background: linear-gradient(#ddd, #f8f8f8); }
.choice input:checked { border-color: #5c7080; background: radial-gradient(circle, #0c4490 3px, transparent 4px), linear-gradient(#3c88d8, #e4f4ff 50%, #40d8f0 75%); }
h4 { font-weight: 400; font-size: 14px; margin-bottom: 11px; }
.settings p { white-space: nowrap; }
.settings a { margin-top: auto; color: #2a22f0; text-decoration: none; }

.form { display: grid; grid-template-columns: 188px 1fr 183px 1fr; row-gap: 7px; align-items: center; padding: 15px 13px 15px 0; flex: none; }
.form label { text-align: right; padding-right: 1px; }
.form .top { align-self: start; padding-top: 3px; }
.form input { min-width: 0; width: 100%; }
.full { grid-column: 2 / -1; }
.memo { display: flex; height: 83px; border: 1px solid #939393; background: #fff; }
.memo textarea { flex: 1; height: auto; border: 0; resize: none; }
.memo-scroll { display: flex; flex-direction: column; justify-content: space-between; background: #c3c3c3; }
.memo .sb { box-shadow: none; background: #ddd; color: #8c8c8c; }

footer { display: flex; align-items: center; gap: 15px; height: 50px; padding: 2px 6px 0 15px; background: #b1b1b1; flex: none; }
.check { flex: 1; display: flex; align-items: center; gap: 5px; }
.check input { appearance: none; width: 18px; height: 18px; border: 2px solid #667480; background: linear-gradient(#fff 30%, #3cc8ec); display: grid; }
.check input::before { content: ""; background: #1450a0; clip-path: polygon(8% 45%, 25% 35%, 42% 60%, 82% 8%, 98% 20%, 45% 92%); }
footer button { width: 112px; height: 25px; border: 1px solid #888; border-radius: 2px; background: linear-gradient(#fff, #d8d8d8 45%, #ccc 50%, #eee); box-shadow: inset 0 0 0 1px #f4f4f4; line-height: 20px; }
```
